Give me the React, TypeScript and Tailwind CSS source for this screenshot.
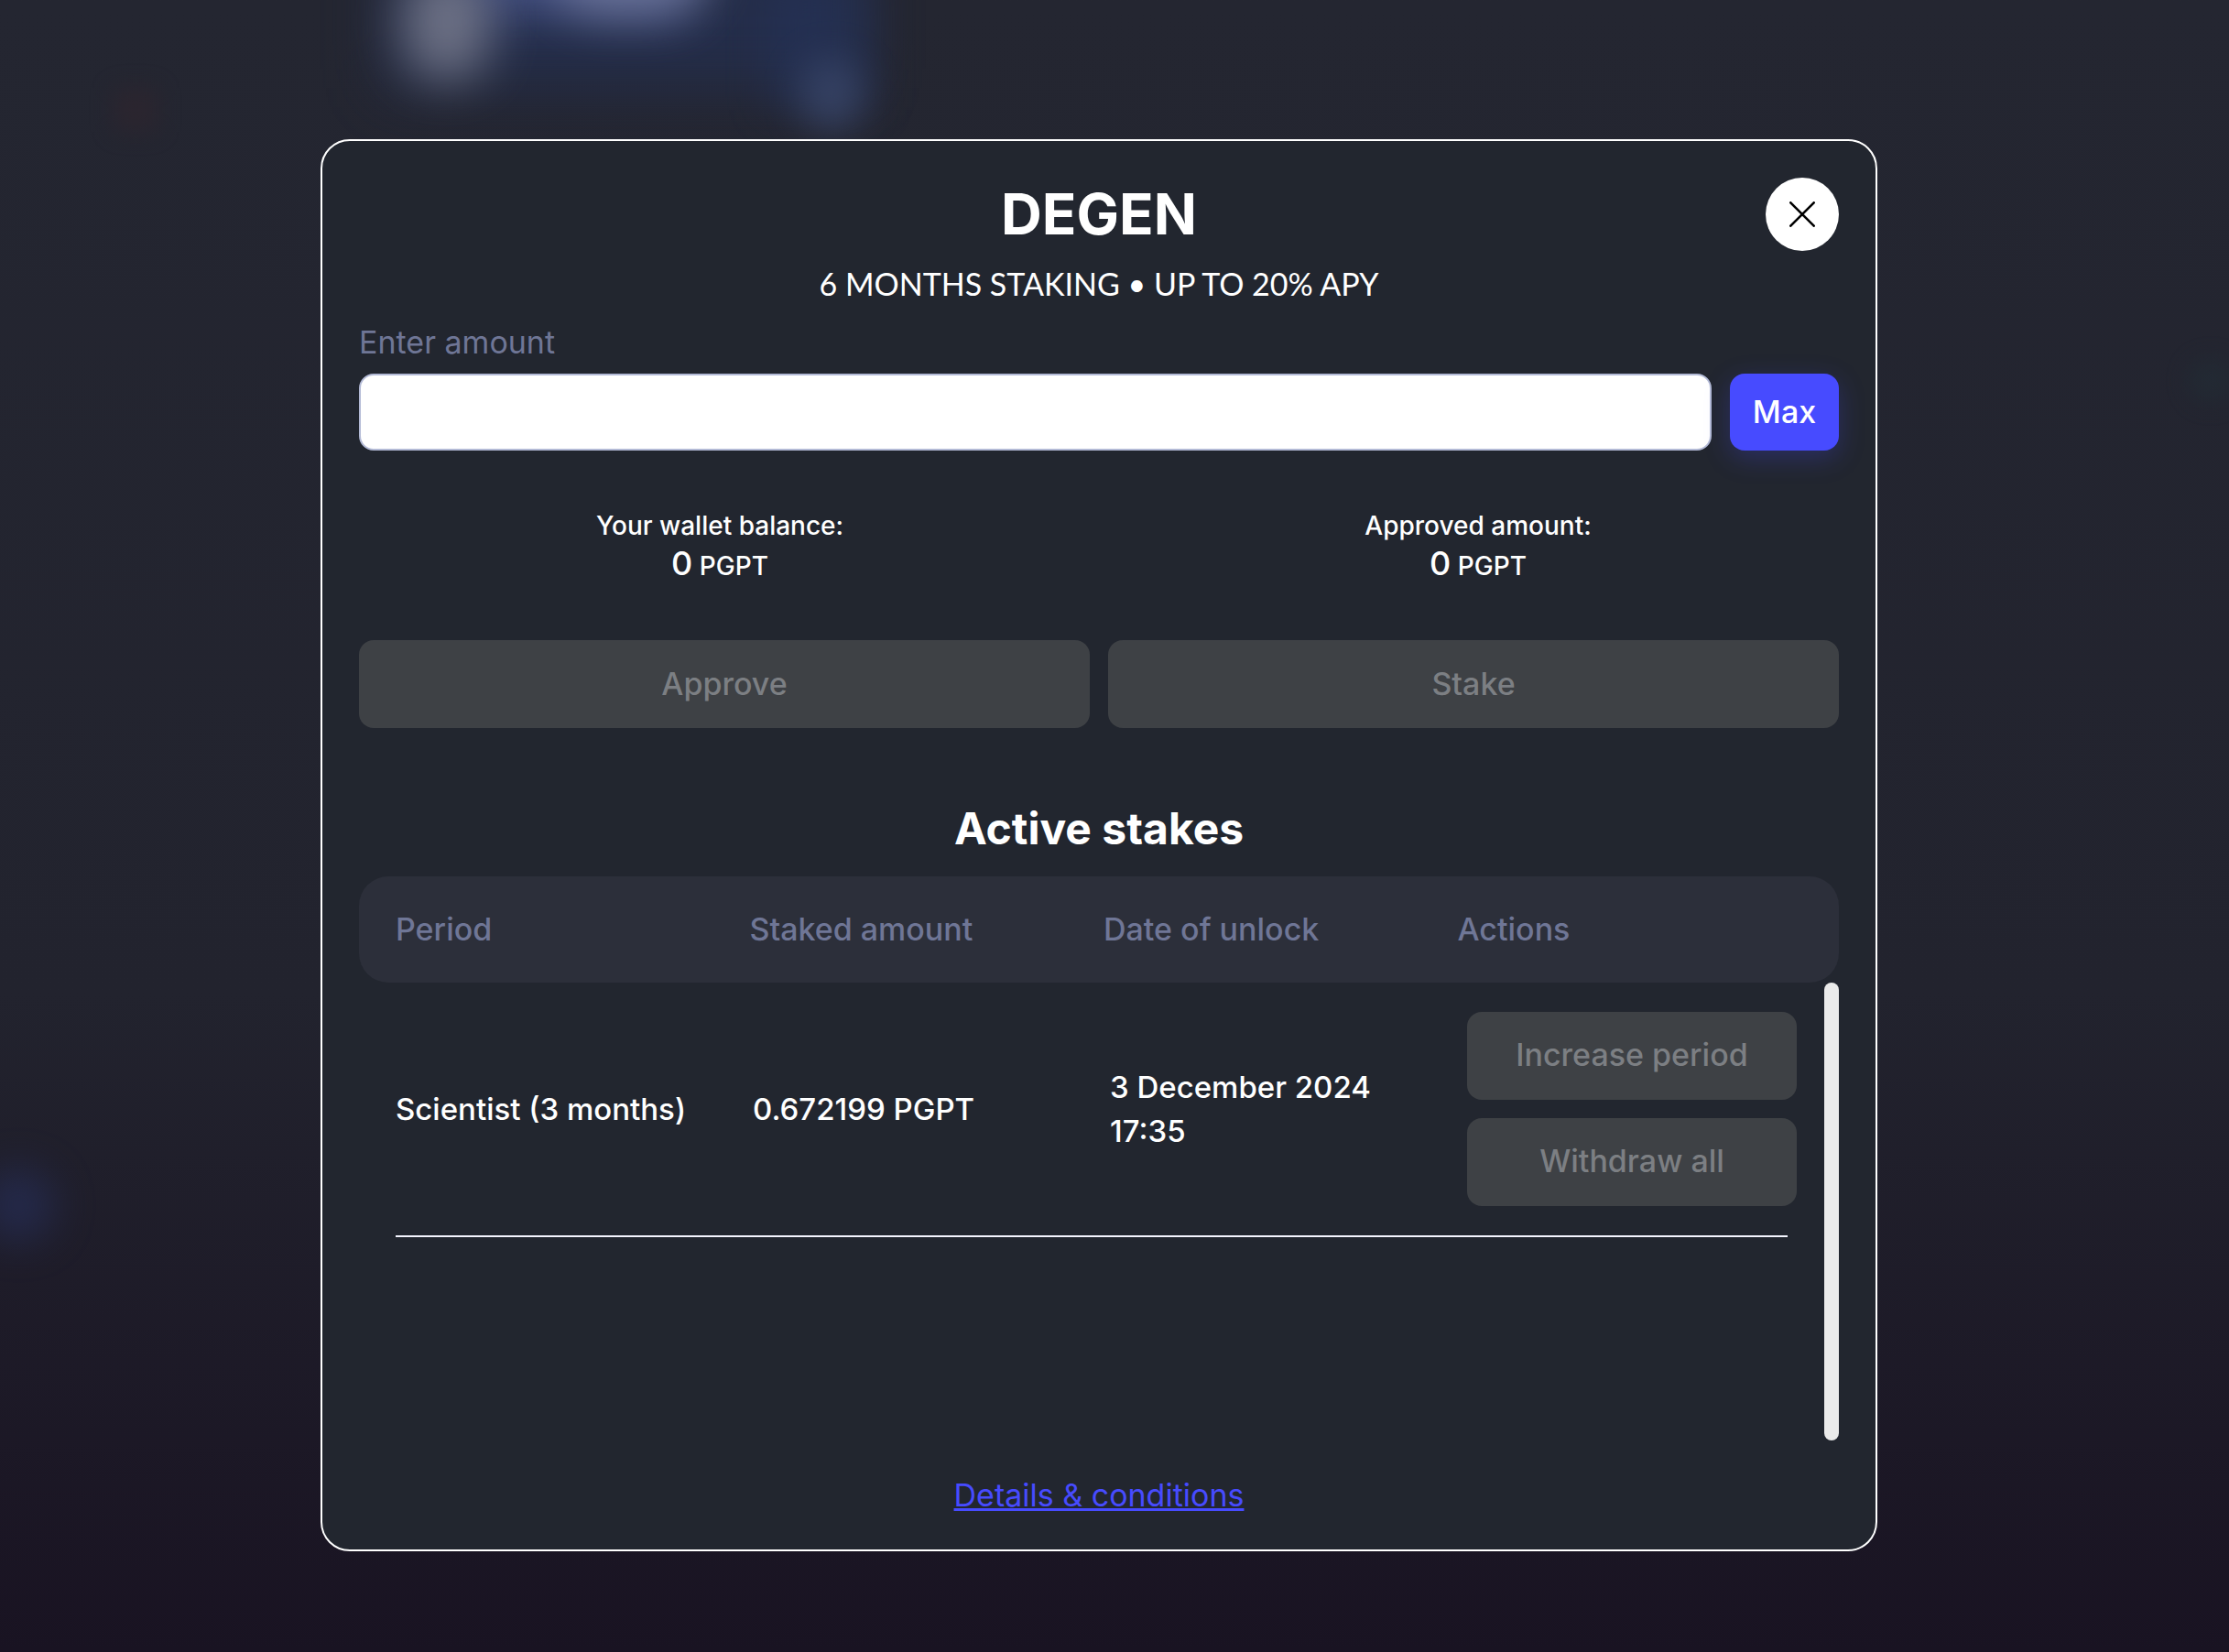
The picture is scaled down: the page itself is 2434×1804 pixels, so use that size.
import { useState } from "react";

const disabledButton =
  "h-24 rounded-2xl bg-[#3e4145] pb-0.5 text-[34px] font-medium text-[#7c7f83]";

const stakes = [
  {
    period: "Scientist (3 months)",
    amount: "0.672199 PGPT",
    date: "3 December 2024",
    time: "17:35",
  },
];

function Backdrop() {
  return (
    <div aria-hidden="true" className="pointer-events-none absolute inset-0 overflow-hidden">
      <div className="absolute -top-20 left-[420px] h-44 w-[520px] bg-[#242f50] opacity-80 blur-[32px]" />
      <div className="absolute -top-6 left-[840px] h-36 w-28 bg-[#25335a] opacity-50 blur-[22px]" />
      <div className="absolute -top-16 left-[510px] h-20 w-60 bg-[#46548c] opacity-80 blur-[26px]" />
      <div className="absolute -top-10 left-[440px] h-32 w-24 rounded-full bg-[#7d8092] opacity-80 blur-[26px]" />
      <div className="absolute -top-24 left-[600px] h-28 w-44 rounded-full bg-[#757da0] opacity-80 blur-[26px]" />
      <div className="absolute top-16 left-[876px] h-20 w-16 rounded-full bg-[#3d4b70] opacity-70 blur-[20px]" />
      <div className="absolute top-24 left-[124px] h-12 w-12 bg-[#30252e] opacity-60 blur-[12px]" />
      <div className="absolute top-[1276px] -left-5 h-20 w-20 rounded-full bg-[#262e58] opacity-70 blur-[22px]" />
      <div className="absolute top-[392px] left-[2390px] h-12 w-12 rounded-full bg-[#222f37] opacity-50 blur-[12px]" />
    </div>
  );
}

function Balance({ label, value }: { label: string; value: string }) {
  return (
    <div className="flex flex-col items-center gap-0.5 font-medium">
      <span className="text-[28px] leading-9">{label}</span>
      <span className="text-[28px] leading-12">
        <span className="text-4xl">{value}</span> PGPT
      </span>
    </div>
  );
}

export default function App() {
  const [amount, setAmount] = useState("");

  return (
    <div className="relative min-h-screen bg-linear-to-b from-[#242631] from-0% via-[#22232e] via-60% to-[#191322] to-100% pt-38 pr-[34px] pb-[110px] font-['Inter',sans-serif] text-white">
      <Backdrop />
      <main
        role="dialog"
        aria-labelledby="dialog-title"
        className="relative mx-auto w-full max-w-[1700px] rounded-[32px] border-2 border-white bg-[#22262f] p-10"
      >
        <header className="relative flex h-20 items-center justify-center">
          <h1 id="dialog-title" className="text-[62px] leading-none font-bold">
            DEGEN
          </h1>
          <button
            type="button"
            aria-label="Close"
            className="absolute top-0 right-0 flex h-20 w-20 items-center justify-center rounded-full bg-white"
          >
            <svg
              viewBox="0 0 28 28"
              className="h-7 w-7"
              fill="none"
              stroke="#000"
              strokeWidth="2.6"
              strokeLinecap="round"
            >
              <path d="M1.3 1.3L26.7 26.7M26.7 1.3L1.3 26.7" />
            </svg>
          </button>
        </header>

        <p className="mt-3 text-center font-['Lato',sans-serif] text-[34px] leading-12">
          6 MONTHS STAKING • UP TO 20% APY
        </p>

        <label htmlFor="amount" className="mt-4 block text-[34px] leading-12 text-[#6f7696]">
          Enter amount
        </label>
        <div className="mt-2.5 flex h-21 gap-5">
          <input
            id="amount"
            type="text"
            inputMode="decimal"
            value={amount}
            onChange={(event) => setAmount(event.target.value)}
            className="min-w-0 flex-1 rounded-2xl border-2 border-[#b3bad6] bg-white px-6 text-[34px] text-[#22262f] outline-none"
          />
          <button
            type="button"
            className="w-[119px] rounded-2xl bg-[#474bff] pb-0.5 text-[34px] font-medium shadow-[0_8px_28px_rgba(71,75,255,0.25)]"
          >
            Max
          </button>
        </div>

        <div className="mt-16 grid grid-cols-2 gap-10">
          <Balance label="Your wallet balance:" value="0" />
          <Balance label="Approved amount:" value="0" />
        </div>

        <div className="mt-[57px] grid grid-cols-2 gap-5">
          <button type="button" disabled className={disabledButton}>
            Approve
          </button>
          <button type="button" disabled className={disabledButton}>
            Stake
          </button>
        </div>

        <h2 className="mt-20 text-center text-5xl leading-15 font-bold">Active stakes</h2>

        <div className="relative mt-[22px]">
          <table className="block">
            <thead className="block">
              <tr className="grid h-29 grid-cols-4 items-center gap-2.5 rounded-[32px] bg-[#2c2f3a] px-10 pb-0.5 text-left text-[34px] text-[#6f7696]">
                <th className="font-medium">Period</th>
                <th className="font-medium">Staked amount</th>
                <th className="font-medium">Date of unlock</th>
                <th className="font-medium">Actions</th>
              </tr>
            </thead>
            <tbody className="block h-[500px] overflow-y-auto pr-14 pl-10 [scrollbar-width:none]">
              {stakes.map((stake) => (
                <tr
                  key={stake.period}
                  className="grid grid-cols-4 items-center gap-10 border-b-2 border-[#f4f5ff] py-8 text-[33px] leading-12 font-medium"
                >
                  <td className="whitespace-nowrap">{stake.period}</td>
                  <td>{stake.amount}</td>
                  <td>
                    {stake.date}
                    <br />
                    {stake.time}
                  </td>
                  <td className="flex w-[360px] flex-col gap-5">
                    <button type="button" disabled className={disabledButton}>
                      Increase period
                    </button>
                    <button type="button" disabled className={disabledButton}>
                      Withdraw all
                    </button>
                  </td>
                </tr>
              ))}
            </tbody>
          </table>
          {/* Scroll track of the stakes list */}
          <div
            aria-hidden="true"
            className="pointer-events-none absolute right-0 bottom-0 h-[500px] w-4 rounded-full bg-[#ebebeb]"
          />
        </div>

        <div className="mt-10 flex justify-center">
          <a href="#details" className="text-[34px] leading-[39px] text-[#474bff] underline">
            Details &amp; conditions
          </a>
        </div>
      </main>
    </div>
  );
}
